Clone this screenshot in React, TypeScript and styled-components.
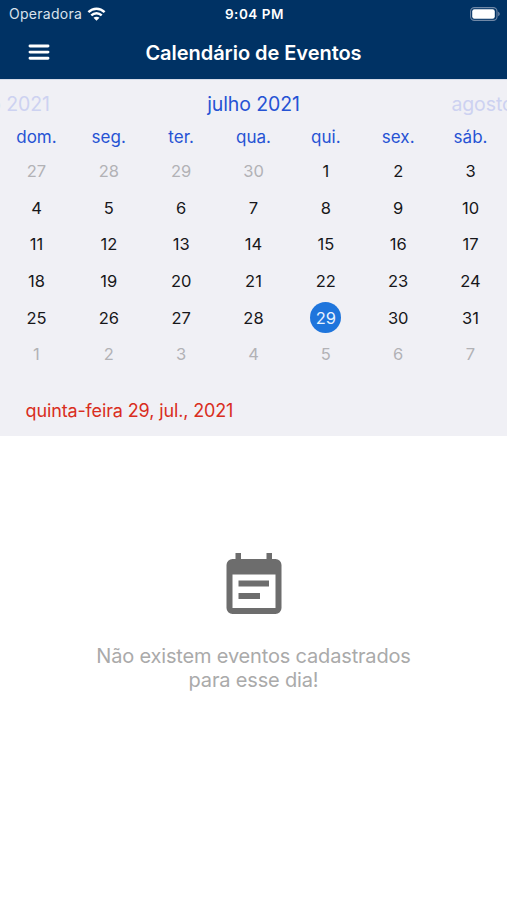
import React from "react";
import styled, { createGlobalStyle } from "styled-components";

const GlobalStyle = createGlobalStyle`
  * { box-sizing: border-box; }
  body {
    margin: 0;
    background: #fff;
    font-family: Inter, "Liberation Sans", sans-serif;
    overflow: hidden;
  }
`;

const Screen = styled.div`
  width: 507px;
  height: 900px;
  display: flex;
  flex-direction: column;
  overflow: hidden;
`;

const Header = styled.header`
  height: 79px;
  background: #003264;
  color: #fff;
`;

const StatusBar = styled.div`
  height: 27px;
  display: grid;
  grid-template-columns: 1fr auto 1fr;
  align-items: center;
  padding: 0 7px 0 9px;
`;

const Carrier = styled.div`
  display: flex;
  align-items: center;
  gap: 5px;
  font-size: 14px;
  line-height: 18px;
  letter-spacing: 0.28px;
  color: #d9e2ec;
`;

const Clock = styled.div`
  font-size: 13.5px;
  line-height: 18px;
  font-weight: 600;
  letter-spacing: 0.55px;
`;

const Battery = styled.div`
  display: flex;
  justify-content: flex-end;
`;

const NavBar = styled.div`
  height: 52px;
  display: grid;
  grid-template-columns: 77px 1fr 77px;
  align-items: center;
`;

const MenuButton = styled.button`
  border: 0;
  background: none;
  padding: 0;
  display: flex;
  justify-content: center;
`;

const Title = styled.h1`
  margin: 0;
  text-align: center;
  font-size: 20px;
  line-height: 26px;
  font-weight: 600;
  letter-spacing: -0.04px;
  white-space: nowrap;
`;

const Calendar = styled.section`
  height: 357px;
  background: #f0f0f5;
  border-top: 1px solid #d5dce9;
`;

const MonthStrip = styled.div`
  height: 47px;
  display: grid;
  grid-template-columns: repeat(3, 253.5px);
  justify-content: center;
  align-items: center;
  overflow: hidden;
`;

const Month = styled.div<{ $current?: boolean }>`
  text-align: center;
  font-size: 19.5px;
  line-height: 24px;
  letter-spacing: -0.1px;
  color: ${(p) => (p.$current ? "#2653d4" : "#cdd2f1")};
`;

const Week = styled.div`
  height: 36.6px;
  display: grid;
  grid-template-columns: repeat(7, 72.35px);
  justify-content: center;
  align-items: center;
`;

const Weekdays = styled(Week)`
  height: 20px;
  font-size: 17px;
  letter-spacing: 0.05px;
  color: #2653d4;
  text-align: center;
`;

const Weeks = styled.div`
  padding-top: 6px;
`;

const Day = styled.div<{ $muted?: boolean; $selected?: boolean }>`
  justify-self: center;
  width: 31px;
  height: 31px;
  border-radius: 50%;
  display: flex;
  align-items: center;
  justify-content: center;
  font-size: 16.5px;
  line-height: 20px;
  background: ${(p) => (p.$selected ? "#1f75dc" : "transparent")};
  color: ${(p) => (p.$selected ? "#e8f2ff" : p.$muted ? "#b2b2b6" : "#17171a")};
`;

const SelectedDate = styled.div`
  margin: 26px 0 0 25.5px;
  font-size: 18px;
  line-height: 24px;
  letter-spacing: -0.13px;
  color: #d92d20;
  white-space: nowrap;
`;

const EmptyState = styled.main`
  flex: 1;
  padding-top: 117px;
  display: flex;
  flex-direction: column;
  align-items: center;
  background: #fff;
`;

const EmptyText = styled.p`
  margin: 29px 0 0;
  width: 340px;
  text-align: center;
  font-size: 20px;
  line-height: 24.3px;
  letter-spacing: -0.17px;
  color: #aaa;
`;

const WifiIcon = () => (
  <svg width="19" height="14" viewBox="0 0 18 14" fill="none" stroke="#fff" strokeWidth="2.4">
    <path d="M.9 5.2C5.5.6 12.5.6 17.1 5.2" />
    <path d="M3.8 8.4c3-2.9 7.4-2.9 10.4 0" />
    <path d="M9 13.8 6 10.8c1.6-1.5 4.4-1.5 6 0z" fill="#fff" stroke="none" />
  </svg>
);

const BatteryIcon = () => (
  <svg width="30" height="14" viewBox="0 0 30 14">
    <rect x=".6" y=".6" width="26.4" height="12.8" rx="3.8" fill="none" stroke="#7088a6" strokeWidth="1.1" />
    <rect x="2.2" y="2.2" width="22.6" height="9.6" rx="2.2" fill="#fff" />
    <path d="M28.2 4.8c2 .7 2 3.7 0 4.4z" fill="#7088a6" />
  </svg>
);

const MenuIcon = () => (
  <svg width="22" height="18" viewBox="0 0 22 18" stroke="#fff" strokeWidth="2.9" strokeLinecap="round">
    <path d="M2 2h18M2 8.1h18M2 14.2h18" />
  </svg>
);

const EventIcon = () => (
  <svg width="56" height="62" viewBox="0 0 56 62" fill="#6d6d6d">
    <path
      fillRule="evenodd"
      d="M9.5 0H15v6h25.5V0H46v6h3.5a6 6 0 0 1 6 6v43a6 6 0 0 1-6 6h-43a6 6 0 0 1-6-6V12a6 6 0 0 1 6-6h3zM6.5 21.5V55h43V21.5z"
    />
    <path d="M12.5 27.5H43v6H12.5zM12.5 40H34v6H12.5z" />
  </svg>
);

const weekdays = ["dom.", "seg.", "ter.", "qua.", "qui.", "sex.", "sáb."];
const weeks = [
  [27, 28, 29, 30, 1, 2, 3],
  [4, 5, 6, 7, 8, 9, 10],
  [11, 12, 13, 14, 15, 16, 17],
  [18, 19, 20, 21, 22, 23, 24],
  [25, 26, 27, 28, 29, 30, 31],
  [1, 2, 3, 4, 5, 6, 7],
];

const isOutside = (week: number, day: number) => (week === 0 && day > 7) || week === 5;

export default function App() {
  return (
    <Screen>
      <GlobalStyle />
      <Header>
        <StatusBar>
          <Carrier>
            Operadora
            <WifiIcon />
          </Carrier>
          <Clock>9:04 PM</Clock>
          <Battery>
            <BatteryIcon />
          </Battery>
        </StatusBar>
        <NavBar>
          <MenuButton aria-label="Menu">
            <MenuIcon />
          </MenuButton>
          <Title>Calendário de Eventos</Title>
        </NavBar>
      </Header>
      <Calendar>
        <MonthStrip>
          <Month>junho 2021</Month>
          <Month $current>julho 2021</Month>
          <Month>agosto 2021</Month>
        </MonthStrip>
        <Weekdays>
          {weekdays.map((name) => (
            <span key={name}>{name}</span>
          ))}
        </Weekdays>
        <Weeks>
          {weeks.map((days, w) => (
            <Week key={w}>
              {days.map((day) => (
                <Day key={day} $muted={isOutside(w, day)} $selected={w === 4 && day === 29}>
                  {day}
                </Day>
              ))}
            </Week>
          ))}
        </Weeks>
        <SelectedDate>quinta-feira 29, jul., 2021</SelectedDate>
      </Calendar>
      <EmptyState>
        <EventIcon />
        <EmptyText>Não existem eventos cadastrados para esse dia!</EmptyText>
      </EmptyState>
    </Screen>
  );
}
